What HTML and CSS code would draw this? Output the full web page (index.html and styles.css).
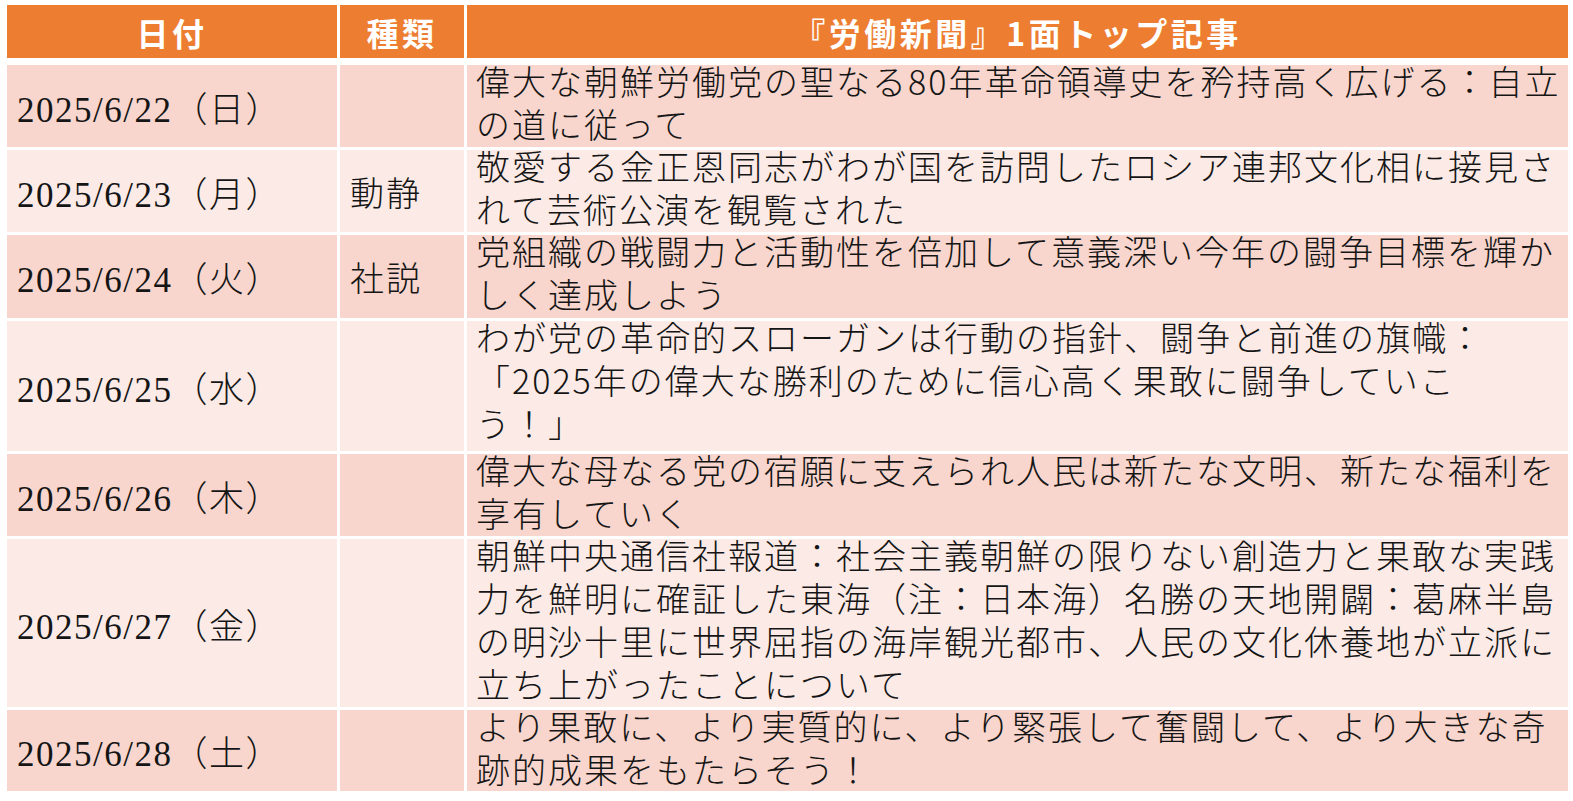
FILE: index.html
```html
<!DOCTYPE html>
<html lang="ja">
<head>
<meta charset="utf-8">
<title>『労働新聞』1面トップ記事</title>
<link rel="stylesheet" href="styles.css">
</head>
<body>
<table class="news">
  <colgroup>
    <col class="c-date">
    <col class="c-kind">
    <col class="c-title">
  </colgroup>
  <thead>
    <tr class="head">
      <th>日付</th>
      <th>種類</th>
      <th>『労働新聞』1面トップ記事</th>
    </tr>
  </thead>
  <tbody>
    <tr class="odd h82">
      <td class="date">2025/6/22（日）</td>
      <td class="kind"></td>
      <td class="title"><div class="txt">偉大な朝鮮労働党の聖なる80年革命領導史を矜持高く広げる：自立<br>の道に従って</div></td>
    </tr>
    <tr class="even h82">
      <td class="date">2025/6/23（月）</td>
      <td class="kind">動静</td>
      <td class="title"><div class="txt">敬愛する金正恩同志がわが国を訪問したロシア連邦文化相に接見さ<br>れて芸術公演を観覧された</div></td>
    </tr>
    <tr class="odd h83">
      <td class="date">2025/6/24（火）</td>
      <td class="kind">社説</td>
      <td class="title"><div class="txt">党組織の戦闘力と活動性を倍加して意義深い今年の闘争目標を輝か<br>しく達成しよう</div></td>
    </tr>
    <tr class="even h130">
      <td class="date">2025/6/25（水）</td>
      <td class="kind"></td>
      <td class="title"><div class="txt">わが党の革命的スローガンは行動の指針、闘争と前進の旗幟：<br>「2025年の偉大な勝利のために信心高く果敢に闘争していこ<br>う！」</div></td>
    </tr>
    <tr class="odd h82">
      <td class="date">2025/6/26（木）</td>
      <td class="kind"></td>
      <td class="title"><div class="txt">偉大な母なる党の宿願に支えられ人民は新たな文明、新たな福利を<br>享有していく</div></td>
    </tr>
    <tr class="even h168">
      <td class="date">2025/6/27（金）</td>
      <td class="kind"></td>
      <td class="title"><div class="txt">朝鮮中央通信社報道：社会主義朝鮮の限りない創造力と果敢な実践<br>力を鮮明に確証した東海（注：日本海）名勝の天地開闢：葛麻半島<br>の明沙十里に世界屈指の海岸観光都市、人民の文化休養地が立派に<br>立ち上がったことについて</div></td>
    </tr>
    <tr class="odd h81">
      <td class="date">2025/6/28（土）</td>
      <td class="kind"></td>
      <td class="title"><div class="txt">より果敢に、より実質的に、より緊張して奮闘して、より大きな奇<br>跡的成果をもたらそう！</div></td>
    </tr>
  </tbody>
</table>
</body>
</html>
```

FILE: styles.css
```css
html, body {
  margin: 0;
  padding: 0;
  background: #ffffff;
}

.news {
  margin: 2px 0 0 4px;
  width: 1567px;
  table-layout: fixed;
  border-collapse: separate;
  border-spacing: 3px;
  font-family: "Noto Sans CJK JP", "Noto Sans", sans-serif;
  color: #151515;
}

.c-date { width: 330px; }
.c-kind { width: 124px; }
.c-title { width: 1101px; }

.news th,
.news td {
  padding: 0;
  box-sizing: border-box;
  overflow: visible;
}

.head th {
  height: 57px;
  background: #ed7d31;
  border-bottom: 4px solid #ffffff;
  color: #ffffff;
  font-weight: 700;
  font-size: 32px;
  letter-spacing: 3.5px;
  text-align: center;
  vertical-align: middle;
  white-space: nowrap;
  line-height: 40px;
}

.odd td { background: #f8d6cd; }
.even td { background: #fbeae6; }

.h81 { height: 81px; }
.h82 { height: 82px; }
.h83 { height: 83px; }
.h130 { height: 130px; }
.h168 { height: 168px; }

.date {
  font-family: "Liberation Serif", "Noto Sans CJK JP", serif;
  font-size: 35px;
  font-weight: 300;
  letter-spacing: 1.5px;
  padding-left: 10px !important;
  vertical-align: middle;
  white-space: nowrap;
}

.kind {
  font-size: 34px;
  font-weight: 300;
  letter-spacing: 2px;
  padding-left: 10px !important;
  vertical-align: middle;
  white-space: nowrap;
}

.title {
  vertical-align: top;
  padding-left: 9px !important;
}

.txt {
  font-size: 34px;
  font-weight: 300;
  letter-spacing: 2px;
  line-height: 43px;
  white-space: nowrap;
  margin-top: -6px;
  margin-bottom: -6px;
}
```
